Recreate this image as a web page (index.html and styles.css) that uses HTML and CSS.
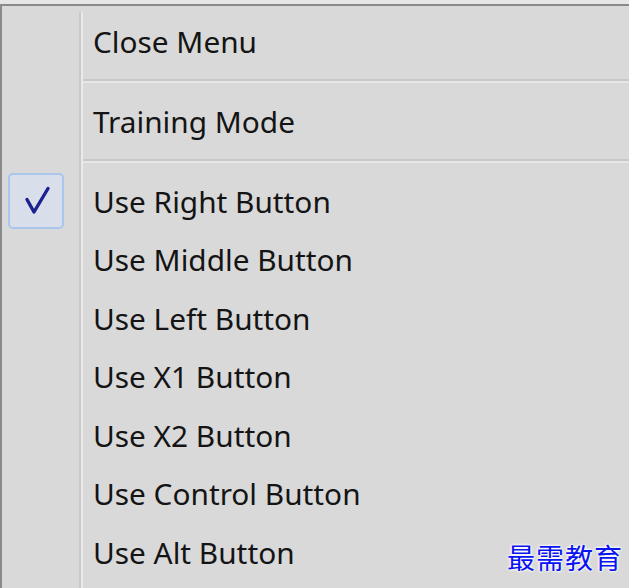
FILE: index.html
```html
<!DOCTYPE html>
<html lang="en">
<head>
  <meta charset="UTF-8">
  <title>Menu</title>
  <link rel="stylesheet" href="styles.css">
</head>
<body>
  <div class="menu">
    <div class="item"><div class="gutter"></div><div class="label">Close Menu</div></div>
    <div class="sep"><div class="gutter"></div><div class="line"></div></div>
    <div class="item"><div class="gutter"></div><div class="label">Training Mode</div></div>
    <div class="sep"><div class="gutter"></div><div class="line"></div></div>
    <div class="item">
      <div class="gutter">
        <span class="check">
          <svg width="32" height="32" viewBox="0 0 32 32"><path d="M7 14.5 L14 27 L28 3.5" fill="none" stroke="#1c2190" stroke-width="3.4" stroke-linecap="round" stroke-linejoin="round"/></svg>
        </span>
      </div>
      <div class="label">Use Right Button</div>
    </div>
    <div class="item"><div class="gutter"></div><div class="label">Use Middle Button</div></div>
    <div class="item"><div class="gutter"></div><div class="label">Use Left Button</div></div>
    <div class="item"><div class="gutter"></div><div class="label">Use X1 Button</div></div>
    <div class="item"><div class="gutter"></div><div class="label">Use X2 Button</div></div>
    <div class="item"><div class="gutter"></div><div class="label">Use Control Button</div></div>
    <div class="item"><div class="gutter"></div><div class="label">Use Alt Button</div></div>
    <div class="filler"><div class="gutter"></div></div>
  </div>
  <div class="mark">最需教育</div>
</body>
</html>
```

FILE: styles.css
```css
body {
  margin: 0;
  background: #e6e6e6;
  font-family: "Noto Sans", "Open Sans", sans-serif;
  overflow: hidden;
  height: 588px;
  position: relative;
}
.menu {
  margin-top: 4px;
  border-top: 2px solid #8a8a8a;
  border-left: 2px solid #8a8a8a;
  background: #d9d9d9;
  padding-top: 6px;
  height: 600px;
  display: flex;
  flex-direction: column;
}
.item, .sep, .filler {
  display: flex;
  flex: none;
}
.item {
  height: 58.5px;
}
.sep {
  height: 21.5px;
}
.filler {
  flex: 1;
}
.gutter {
  width: 77px;
  flex: none;
  border-right: 2px solid #c9c9c9;
  box-shadow: 2px 0 0 #e9e9e9;
  display: flex;
  align-items: center;
}
.label {
  padding-left: 12px;
  display: flex;
  align-items: center;
  font-size: 29.8px;
  color: #141414;
}
.line {
  flex: 1;
  margin-left: 2px;
  align-self: center;
  height: 2px;
  background: #c9c9c9;
  border-bottom: 2px solid #e6e6e6;
}
.check {
  margin-left: 6px;
  width: 52px;
  height: 52px;
  border: 2px solid #a9c7ec;
  border-radius: 5px;
  background: #d8dfea;
  display: flex;
  align-items: center;
  justify-content: center;
}
.mark {
  position: absolute;
  left: 507px;
  top: 537px;
  font-family: "Noto Sans CJK SC", sans-serif;
  font-size: 28px;
  color: #0a14f0;
  letter-spacing: 1px;
  text-shadow: 0 0 3px #fff, 0 0 3px #fff, 0 0 2px #fff;
}
```
